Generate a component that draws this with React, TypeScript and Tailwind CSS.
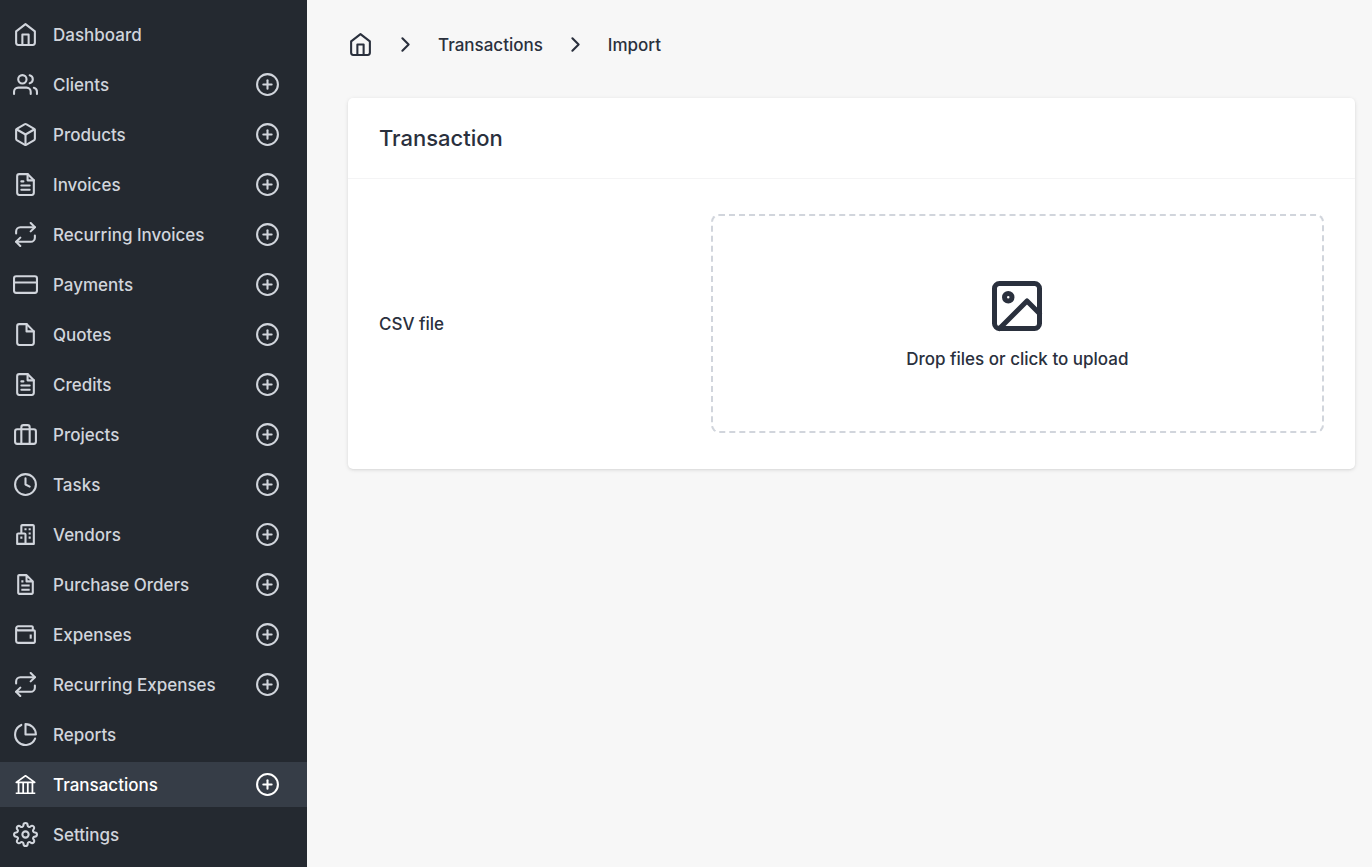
import { useState } from 'react';
import type { IconType } from 'react-icons';
import {
  FiBox,
  FiBriefcase,
  FiChevronRight,
  FiClock,
  FiCreditCard,
  FiFile,
  FiFileText,
  FiHome,
  FiImage,
  FiPieChart,
  FiPlusCircle,
  FiRepeat,
  FiSettings,
  FiUsers,
} from 'react-icons/fi';
import { BiBuildings, BiFile, BiWallet } from 'react-icons/bi';
import { AiOutlineBank } from 'react-icons/ai';

interface NavItem {
  name: string;
  icon: IconType;
  creatable?: boolean;
  current?: boolean;
}

const navigation: NavItem[] = [
  { name: 'Dashboard', icon: FiHome },
  { name: 'Clients', icon: FiUsers, creatable: true },
  { name: 'Products', icon: FiBox, creatable: true },
  { name: 'Invoices', icon: FiFileText, creatable: true },
  { name: 'Recurring Invoices', icon: FiRepeat, creatable: true },
  { name: 'Payments', icon: FiCreditCard, creatable: true },
  { name: 'Quotes', icon: FiFile, creatable: true },
  { name: 'Credits', icon: FiFileText, creatable: true },
  { name: 'Projects', icon: FiBriefcase, creatable: true },
  { name: 'Tasks', icon: FiClock, creatable: true },
  { name: 'Vendors', icon: BiBuildings, creatable: true },
  { name: 'Purchase Orders', icon: BiFile, creatable: true },
  { name: 'Expenses', icon: BiWallet, creatable: true },
  { name: 'Recurring Expenses', icon: FiRepeat, creatable: true },
  { name: 'Reports', icon: FiPieChart },
  { name: 'Transactions', icon: AiOutlineBank, creatable: true, current: true },
  { name: 'Settings', icon: FiSettings },
];

function SidebarItem({ item }: { item: NavItem }) {
  const Icon = item.icon;
  return (
    <li
      className={
        item.current
          ? 'flex h-[45px] items-center justify-between bg-[#363d47] pr-[27px] pl-[13px] text-white'
          : 'flex h-[45px] items-center justify-between pr-[27px] pl-[13px] text-gray-300'
      }
    >
      <a
        href="#"
        aria-current={item.current ? 'page' : undefined}
        className="flex grow items-center gap-[15px]"
      >
        <Icon className="size-[25px] shrink-0" aria-hidden="true" />
        <span>{item.name}</span>
      </a>
      {item.creatable && (
        <button type="button" aria-label={`New: ${item.name}`} className="cursor-pointer">
          <FiPlusCircle className="size-[25px]" aria-hidden="true" />
        </button>
      )}
    </li>
  );
}

function Breadcrumbs() {
  return (
    <nav aria-label="Breadcrumb">
      <ol className="flex h-[25px] items-center gap-5">
        <li>
          <a href="#" aria-label="Home">
            <FiHome className="size-[25px]" aria-hidden="true" />
          </a>
        </li>
        <li className="flex items-center gap-5">
          <FiChevronRight className="size-[25px]" aria-hidden="true" />
          <a href="#">Transactions</a>
        </li>
        <li className="flex items-center gap-5">
          <FiChevronRight className="size-[25px]" aria-hidden="true" />
          <a href="#">Import</a>
        </li>
      </ol>
    </nav>
  );
}

function UploadCard() {
  const [fileName, setFileName] = useState('');
  return (
    <section className="mt-[41px] rounded-[5px] bg-white shadow-[0_1px_4px_rgb(0_0_0/0.1),0_1px_3px_-1px_rgb(0_0_0/0.1)]">
      <header className="border-b border-[#f4f4f5] px-[31px] py-6">
        <h3 className="text-[22px] leading-8 font-medium">Transaction</h3>
      </header>
      <div className="grid grid-cols-[1fr_2fr] items-center gap-[25px] px-[31px] pt-[35px] pb-9">
        <label htmlFor="csv">CSV file</label>
        <label
          htmlFor="csv"
          className="flex h-[219px] cursor-pointer flex-col items-center justify-center gap-[10px] rounded-lg border-2 border-dashed border-gray-300"
        >
          <FiImage className="size-[60px]" aria-hidden="true" />
          <span>{fileName || 'Drop files or click to upload'}</span>
          <input
            id="csv"
            type="file"
            accept=".csv"
            className="sr-only"
            onChange={(event) => setFileName(event.target.files?.[0]?.name ?? '')}
          />
        </label>
      </div>
    </section>
  );
}

export default function App() {
  return (
    <div className="flex min-h-screen bg-[#f7f7f7] font-['Inter',sans-serif] text-[17px] leading-[26px] font-medium text-[#2a303d]">
      <aside className="w-[307px] shrink-0 bg-[#242930] pt-3">
        <nav aria-label="Main">
          <ul className="flex flex-col gap-[5px]">
            {navigation.map((item) => (
              <SidebarItem key={item.name} item={item} />
            ))}
          </ul>
        </nav>
      </aside>
      <main className="grow pt-8 pr-[17px] pl-[41px]">
        <Breadcrumbs />
        <UploadCard />
      </main>
    </div>
  );
}
